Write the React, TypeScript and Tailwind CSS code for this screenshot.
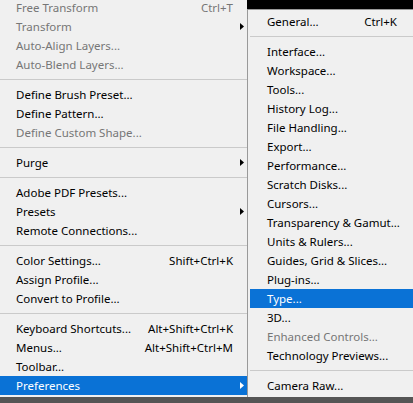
import React from "react";

type Item =
  | { sep: true }
  | { label: string; shortcut?: string; sub?: boolean; disabled?: boolean; active?: boolean };

const mainMenu: Item[] = [
  { label: "Free Transform", shortcut: "Ctrl+T", disabled: true },
  { label: "Transform", sub: true, disabled: true },
  { label: "Auto-Align Layers...", disabled: true },
  { label: "Auto-Blend Layers...", disabled: true },
  { sep: true },
  { label: "Define Brush Preset..." },
  { label: "Define Pattern..." },
  { label: "Define Custom Shape...", disabled: true },
  { sep: true },
  { label: "Purge", sub: true },
  { sep: true },
  { label: "Adobe PDF Presets..." },
  { label: "Presets", sub: true },
  { label: "Remote Connections..." },
  { sep: true },
  { label: "Color Settings...", shortcut: "Shift+Ctrl+K" },
  { label: "Assign Profile..." },
  { label: "Convert to Profile..." },
  { sep: true },
  { label: "Keyboard Shortcuts...", shortcut: "Alt+Shift+Ctrl+K" },
  { label: "Menus...", shortcut: "Alt+Shift+Ctrl+M" },
  { label: "Toolbar..." },
  { label: "Preferences", sub: true, active: true },
];

const prefsMenu: Item[] = [
  { label: "General...", shortcut: "Ctrl+K" },
  { sep: true },
  { label: "Interface..." },
  { label: "Workspace..." },
  { label: "Tools..." },
  { label: "History Log..." },
  { label: "File Handling..." },
  { label: "Export..." },
  { label: "Performance..." },
  { label: "Scratch Disks..." },
  { label: "Cursors..." },
  { label: "Transparency & Gamut..." },
  { label: "Units & Rulers..." },
  { label: "Guides, Grid & Slices..." },
  { label: "Plug-ins..." },
  { label: "Type...", active: true },
  { label: "3D..." },
  { label: "Enhanced Controls...", disabled: true },
  { label: "Technology Previews..." },
  { sep: true },
  { label: "Camera Raw..." },
];

function Arrow({ white }: { white?: boolean }) {
  return (
    <svg width="4" height="7" viewBox="0 0 4 7" className="block">
      <path d="M0 0 L4 3.5 L0 7 Z" fill={white ? "#ffffff" : "#000000"} />
    </svg>
  );
}

function MenuRows({ items, pl, pr, gap }: { items: Item[]; pl: string; pr: string; gap: string }) {
  return (
    <>
      {items.map((it, i) => {
        if ("sep" in it) {
          return (
            <div key={i} className="h-[11px] flex items-center">
              <div className="h-px w-full bg-[#cacaca]" />
            </div>
          );
        }
        const color = it.active ? "text-white" : it.disabled ? "text-[#767676]" : "text-black";
        return (
          <div
            key={i}
            className={`h-[19px] flex items-center justify-between ${pl} ${pr} ${color} ${
              it.active ? "bg-[#0a72d6]" : ""
            }`}
          >
            <span className="whitespace-nowrap">{it.label}</span>
            {it.shortcut && <span className={`whitespace-nowrap ${gap}`}>{it.shortcut}</span>}
            {it.sub && <Arrow white={it.active} />}
          </div>
        );
      })}
    </>
  );
}

export default function App() {
  return (
    <div
      className="w-[413px] h-[403px] overflow-hidden flex flex-col bg-[#555555] text-[11.5px] leading-none"
      style={{ fontFamily: '"Noto Sans", "Noto Sans CJK KR", sans-serif' }}
    >
      <div className="flex h-[397px] shrink-0">
        <div className="w-[247px] shrink-0 bg-[#f0f0f0] overflow-hidden">
          <div className="-mt-[2px]">
            <MenuRows items={mainMenu} pl="pl-[16px]" pr="pr-[3px]" gap="mr-[11px]" />
          </div>
        </div>
        <div className="flex-1 min-w-0 flex flex-col">
          <div className="h-[9px] bg-black" />
          <div className="flex-1 bg-[#f0f0f0] border-l border-t border-[#999999] pl-[2px] pt-[2px]">
            <MenuRows items={prefsMenu} pl="pl-[17px]" pr="pr-[16px]" gap="" />
          </div>
        </div>
      </div>
      <div className="flex-1 bg-[#555555]" />
    </div>
  );
}
